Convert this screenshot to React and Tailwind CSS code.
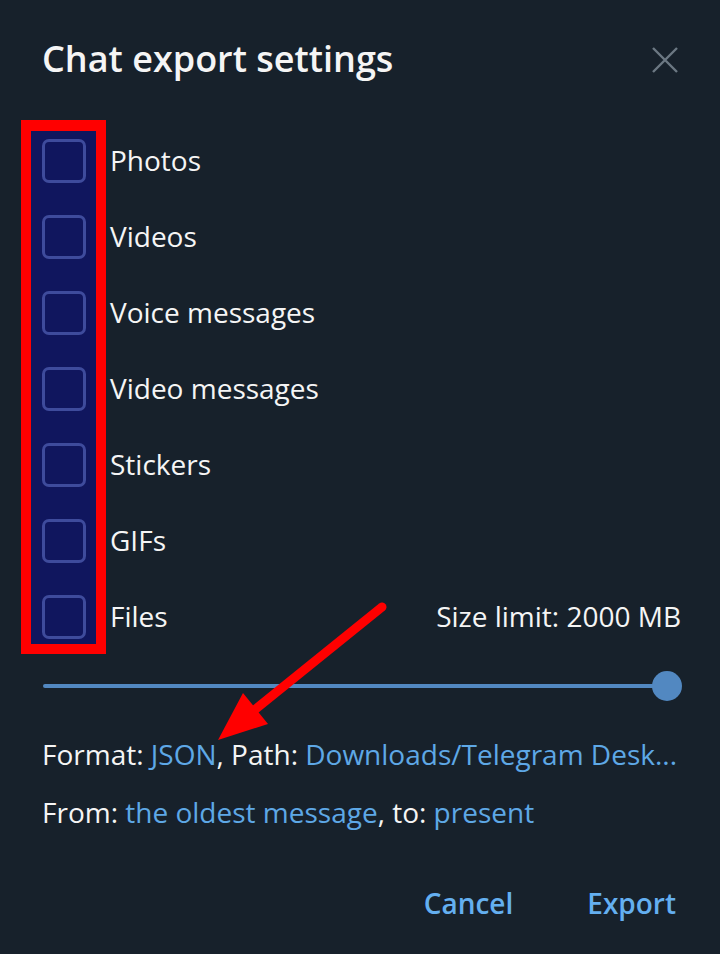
export default function App() {
  const items = ["Photos", "Videos", "Voice messages", "Video messages", "Stickers", "GIFs", "Files"];
  return (
    <div className="relative w-[720px] h-[954px] overflow-hidden bg-[#17212b] text-[#f5f5f5]" style={{ fontFamily: '"Open Sans", sans-serif' }}>
      <div className="flex h-[120px] items-center justify-between pl-[42px] pr-[42px]">
        <div className="text-[36px] font-semibold leading-none -mt-[2px]">Chat export settings</div>
        <svg width="26" height="26" viewBox="0 0 26 26" className="text-[#6c7883]">
          <path d="M1 1 L25 25 M25 1 L1 25" stroke="currentColor" strokeWidth="2.4" />
        </svg>
      </div>

      <div className="flex">
        <div className="ml-[21px] w-[85px] h-[534px] border-[10px] border-t-[11px] border-[#ff0000] bg-[#10165e] flex flex-col gap-[32px] pt-[8px] pl-[11px]">
          {items.map((t) => (
            <div key={t} className="w-[44px] h-[44px] shrink-0 rounded-[7px] border-[3px] border-[#3e4b9c]" />
          ))}
        </div>
        <div className="flex-1 flex flex-col pt-[2px] pl-[4px] pr-[39px]">
          {items.map((t) => (
            <div key={t} className="h-[76px] flex items-center justify-between text-[28px] leading-none">
              <span>{t}</span>
              {t === "Files" && <span>Size limit: 2000 MB</span>}
            </div>
          ))}
        </div>
      </div>

      <div className="mt-[17px] ml-[43px] mr-[38px] flex items-center h-[30px]">
        <div className="flex-1 h-[4px] bg-[#5288c1] rounded-l-full" />
        <div className="w-[30px] h-[30px] rounded-full bg-[#5288c1] -ml-[15px]" />
      </div>

      <div className="ml-[42px] mt-[39px] text-[28px] leading-none whitespace-nowrap">
        Format: <span className="text-[#5ea8e6]">JSON</span>, Path: <span className="text-[#5ea8e6]">Downloads/Telegram Desk...</span>
      </div>
      <div className="ml-[42px] mt-[30px] text-[28px] leading-none whitespace-nowrap">
        From: <span className="text-[#5ea8e6]">the oldest message</span>, to: <span className="text-[#5ea8e6]">present</span>
      </div>

      <div className="flex justify-end gap-[74px] pr-[44px] mt-[63px] text-[28px] font-semibold leading-none text-[#64aff0]">
        <span>Cancel</span>
        <span>Export</span>
      </div>

      <svg className="absolute left-0 top-0 pointer-events-none" width="720" height="954">
        <line x1="382" y1="607" x2="252" y2="712" stroke="#ff0000" strokeWidth="9" strokeLinecap="round" />
        <polygon points="218,740 243,693 268,724" fill="#ff0000" />
      </svg>
    </div>
  );
}
